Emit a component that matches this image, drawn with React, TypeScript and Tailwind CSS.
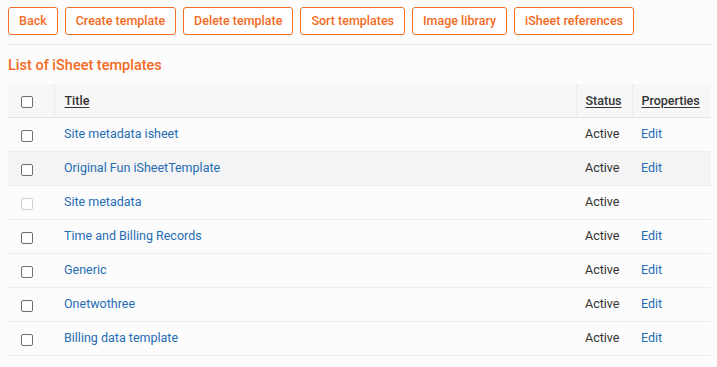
import React from 'react';

const BUTTONS = ['Back', 'Create template', 'Delete template', 'Sort templates', 'Image library', 'iSheet references'];

interface TemplateRow {
  title: string;
  status: string;
  editable: boolean;
}

const ROWS: TemplateRow[] = [
  { title: 'Site metadata isheet', status: 'Active', editable: true },
  { title: 'Original Fun iSheetTemplate', status: 'Active', editable: true },
  { title: 'Site metadata', status: 'Active', editable: false },
  { title: 'Time and Billing Records', status: 'Active', editable: true },
  { title: 'Generic', status: 'Active', editable: true },
  { title: 'Onetwothree', status: 'Active', editable: true },
  { title: 'Billing data template', status: 'Active', editable: true },
];

const Checkbox = ({ disabled = false }: { disabled?: boolean }) => (
  <div
    className={`w-[12px] h-[12px] rounded-[2px] border bg-white ml-[13px] mt-[4px] ${
      disabled ? 'border-[#d2d2d2]' : 'border-[#6e6e6e]'
    }`}
  />
);

export default function App() {
  return (
    <div className="min-h-screen bg-[#fcfcfc] pl-2 pr-1.5 pt-[7px] font-['Roboto',sans-serif] text-[12.5px] text-[#333]">
      <div className="flex gap-[7px] pb-[9px] border-b border-[#e6e6e6]">
        {BUTTONS.map(label => (
          <button
            key={label}
            className="h-[28px] px-[10px] bg-white border border-[#f07124] rounded-[3px] text-[#f26b24] font-medium text-[12.5px] leading-none"
          >
            {label}
          </button>
        ))}
      </div>

      <h2 className="mt-[11px] text-[14.5px] leading-[20px] font-medium text-[#f26b24]">List of iSheet templates</h2>

      <table className="mt-[8px] w-full border-collapse table-fixed">
        <colgroup>
          <col className="w-[46px]" />
          <col />
          <col className="w-[56px]" />
          <col className="w-[79px]" />
        </colgroup>
        <thead>
          <tr className="h-[33px] bg-[#f7f7f7] border-b border-[#e3e3e3]">
            <th className="border-r border-[#ececec] align-middle">
              <Checkbox />
            </th>
            <th className="text-left font-medium px-[10px] pt-[2px] border-r border-[#ececec]">
              <span className="underline underline-offset-2">Title</span>
            </th>
            <th className="text-left font-medium pl-[9px] pt-[2px] border-r border-[#ececec]">
              <span className="underline underline-offset-2">Status</span>
            </th>
            <th className="text-left font-medium pl-[9px] pt-[2px]">
              <span className="underline underline-offset-2">Properties</span>
            </th>
          </tr>
        </thead>
        <tbody>
          {ROWS.map((row, i) => (
            <tr key={row.title} className={`h-[34px] border-b border-[#ececec] ${i === 1 ? 'bg-[#f4f4f4]' : ''}`}>
              <td className="align-middle">
                <Checkbox disabled={!row.editable} />
              </td>
              <td className="px-[10px] pt-[1px] text-[#256db4]">{row.title}</td>
              <td className="pl-[9px] pt-[1px]">{row.status}</td>
              <td className="pl-[9px] pt-[1px] text-[#256db4]">{row.editable ? 'Edit' : ''}</td>
            </tr>
          ))}
        </tbody>
      </table>
    </div>
  );
}
